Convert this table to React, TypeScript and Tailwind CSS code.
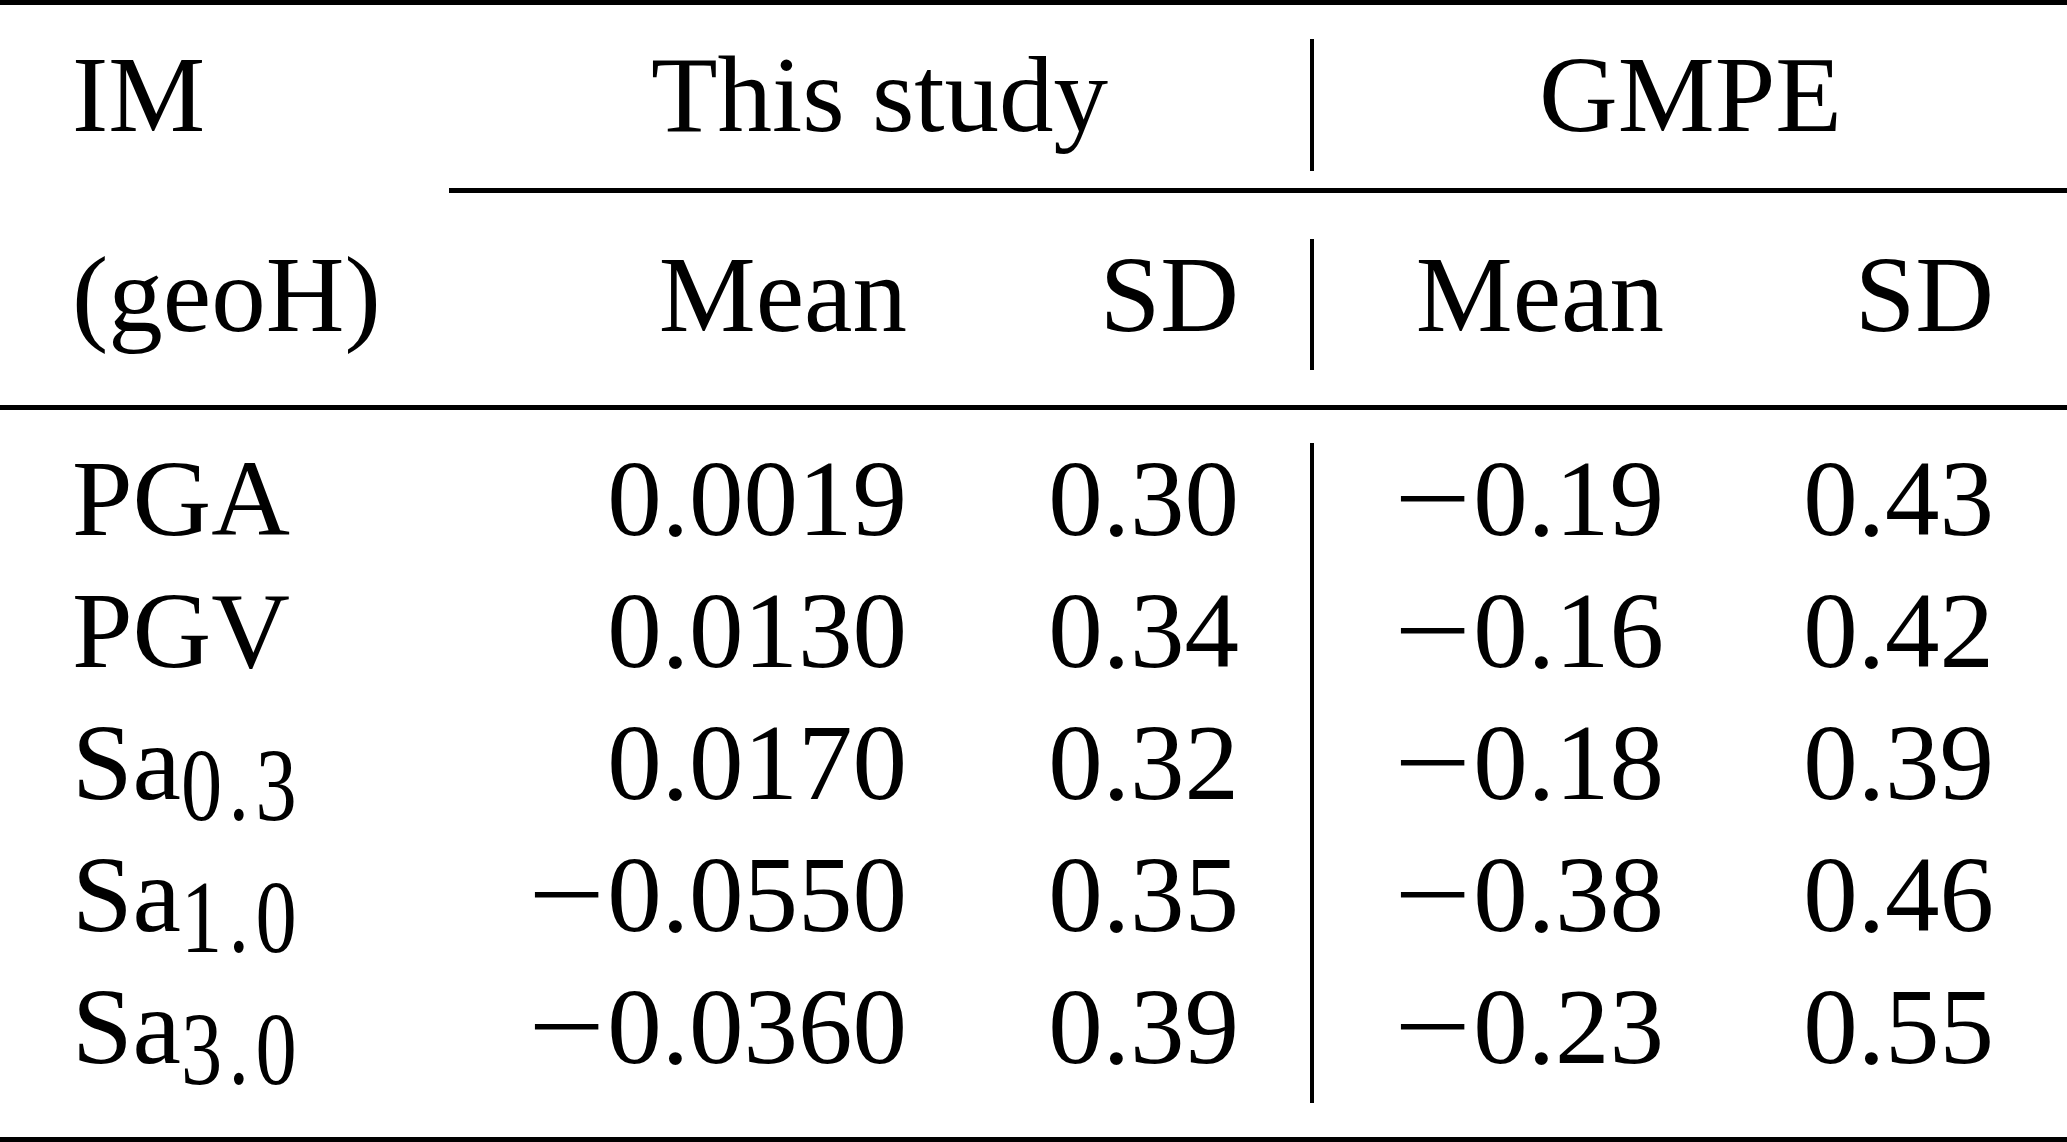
import React from "react";

function Num({ v }: { v: string }) {
  if (v.startsWith("−")) {
    return (
      <span>
        <span className="inline-block mr-[10px] scale-x-[1.25]">−</span>
        {v.slice(1)}
      </span>
    );
  }
  return <span>{v}</span>;
}

function Sub({ base, sub }: { base: string; sub: string }) {
  return (
    <span>
      {base}
      <span className="inline-block origin-left align-[-21px] text-[103px] tracking-[8px] scale-x-[0.8]">
        {sub}
      </span>
    </span>
  );
}

const rows: { label: React.ReactNode; m1: string; s1: string; m2: string; s2: string }[] = [
  { label: "PGA", m1: "0.0019", s1: "0.30", m2: "−0.19", s2: "0.43" },
  { label: "PGV", m1: "0.0130", s1: "0.34", m2: "−0.16", s2: "0.42" },
  { label: <Sub base="Sa" sub="0.3" />, m1: "0.0170", s1: "0.32", m2: "−0.18", s2: "0.39" },
  { label: <Sub base="Sa" sub="1.0" />, m1: "−0.0550", s1: "0.35", m2: "−0.38", s2: "0.46" },
  { label: <Sub base="Sa" sub="3.0" />, m1: "−0.0360", s1: "0.39", m2: "−0.23", s2: "0.55" },
];

export default function App() {
  return (
    <div
      className="w-[2067px] h-[1142px] bg-white text-black text-[109px] leading-[112px] overflow-hidden flex flex-col"
      style={{ fontFamily: '"Liberation Serif", "Times New Roman", serif' }}
    >
      {/* top rule */}
      <div className="h-[5px] bg-black shrink-0" />

      {/* header row 1 */}
      <div className="mt-[34px] h-[132px] flex shrink-0">
        <div className="w-[449px] pl-[72px] whitespace-nowrap">IM</div>
        <div className="w-[861px] text-center whitespace-nowrap">This study</div>
        <div className="w-[4px] bg-black" />
        <div className="flex-1 text-center whitespace-nowrap">GMPE</div>
      </div>

      {/* cmidrule */}
      <div className="mt-[17px] ml-[449px] h-[5px] bg-black shrink-0" />

      {/* header row 2 */}
      <div className="mt-[46px] h-[131px] flex shrink-0">
        <div className="w-[449px] pl-[72px] whitespace-nowrap">(geoH)</div>
        <div className="w-[458px] text-right">Mean</div>
        <div className="w-[332px] text-right">SD</div>
        <div className="w-[71px]" />
        <div className="w-[4px] bg-black" />
        <div className="w-[350px] text-right">Mean</div>
        <div className="w-[330px] text-right">SD</div>
      </div>

      {/* midrule */}
      <div className="mt-[35px] h-[5px] bg-black shrink-0" />

      {/* data */}
      <div className="mt-[33px] flex flex-col shrink-0">
        {rows.map((r, i) => (
          <div key={i} className="h-[132px] flex">
            <div className="w-[449px] pl-[72px] whitespace-nowrap">{r.label}</div>
            <div className="w-[458px] text-right whitespace-nowrap">
              <Num v={r.m1} />
            </div>
            <div className="w-[332px] text-right whitespace-nowrap">
              <Num v={r.s1} />
            </div>
            <div className="w-[71px]" />
            <div className="w-[4px] bg-black" />
            <div className="w-[350px] text-right whitespace-nowrap">
              <Num v={r.m2} />
            </div>
            <div className="w-[330px] text-right whitespace-nowrap">
              <Num v={r.s2} />
            </div>
          </div>
        ))}
      </div>

      {/* bottom rule */}
      <div className="mt-[34px] h-[5px] bg-black shrink-0" />
    </div>
  );
}
